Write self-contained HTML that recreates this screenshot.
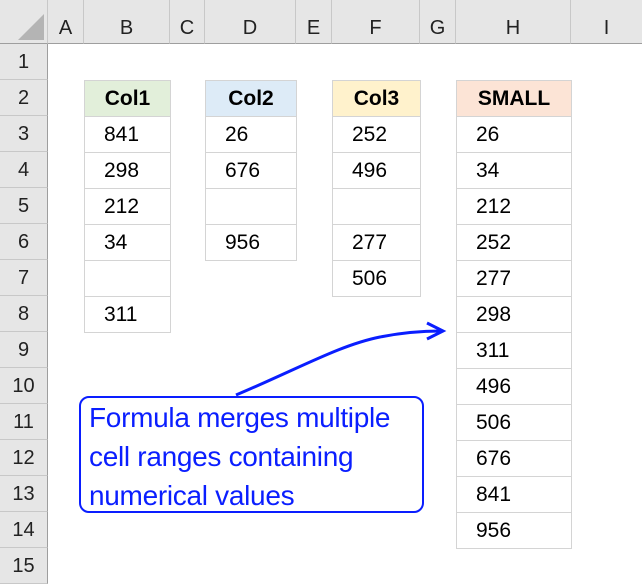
<html><head><style>
body{margin:0;width:642px;height:578px;overflow:hidden;background:#fff;font-family:"Liberation Sans",sans-serif;position:relative}
div{position:absolute;box-sizing:border-box}
.ch{top:0;height:44px;background:#e6e6e6;border-right:1px solid #c8c8c8;border-bottom:1px solid #9e9e9e;text-align:center;line-height:56px;font-size:20px;color:#222}
.rh{left:0;width:48px;height:36px;background:#e6e6e6;border-bottom:1px solid #c8c8c8;border-right:1px solid #9e9e9e;text-align:center;line-height:36px;font-size:20px;color:#222}
.c{height:37px;border:1px solid #d4d4d4;font-size:21px;line-height:36px;padding-left:19px;color:#000}
.h{font-weight:bold;text-align:center;padding-left:0}
</style></head><body>
<div class="ch" style="left:0;width:48px"><svg width="48" height="44" style="position:absolute;left:0;top:0"><polygon points="44,14 44,40 18,40" fill="#b4b4b4"/></svg></div>
<div class="ch" style="left:48px;width:36px">A</div>
<div class="ch" style="left:84px;width:86px">B</div>
<div class="ch" style="left:170px;width:35px">C</div>
<div class="ch" style="left:205px;width:91px">D</div>
<div class="ch" style="left:296px;width:36px">E</div>
<div class="ch" style="left:332px;width:88px">F</div>
<div class="ch" style="left:420px;width:36px">G</div>
<div class="ch" style="left:456px;width:115px">H</div>
<div class="ch" style="left:571px;width:71px;border-right:none">I</div>
<div class="rh" style="top:44px">1</div><div class="rh" style="top:80px">2</div><div class="rh" style="top:116px">3</div><div class="rh" style="top:152px">4</div><div class="rh" style="top:188px">5</div><div class="rh" style="top:224px">6</div><div class="rh" style="top:260px">7</div><div class="rh" style="top:296px">8</div><div class="rh" style="top:332px">9</div><div class="rh" style="top:368px">10</div><div class="rh" style="top:404px">11</div><div class="rh" style="top:440px">12</div><div class="rh" style="top:476px">13</div><div class="rh" style="top:512px">14</div><div class="rh" style="top:548px">15</div>

<div class="c h" style="left:84px;top:80px;width:87px;background:#e2efda">Col1</div>
<div class="c" style="left:84px;top:116px;width:87px">841</div>
<div class="c" style="left:84px;top:152px;width:87px">298</div>
<div class="c" style="left:84px;top:188px;width:87px">212</div>
<div class="c" style="left:84px;top:224px;width:87px">34</div>
<div class="c" style="left:84px;top:260px;width:87px"></div>
<div class="c" style="left:84px;top:296px;width:87px">311</div>

<div class="c h" style="left:205px;top:80px;width:92px;background:#ddebf7">Col2</div>
<div class="c" style="left:205px;top:116px;width:92px">26</div>
<div class="c" style="left:205px;top:152px;width:92px">676</div>
<div class="c" style="left:205px;top:188px;width:92px"></div>
<div class="c" style="left:205px;top:224px;width:92px">956</div>

<div class="c h" style="left:332px;top:80px;width:89px;background:#fff2cc">Col3</div>
<div class="c" style="left:332px;top:116px;width:89px">252</div>
<div class="c" style="left:332px;top:152px;width:89px">496</div>
<div class="c" style="left:332px;top:188px;width:89px"></div>
<div class="c" style="left:332px;top:224px;width:89px">277</div>
<div class="c" style="left:332px;top:260px;width:89px">506</div>

<div class="c h" style="left:456px;top:80px;width:116px;background:#fce4d6">SMALL</div>
<div class="c" style="left:456px;top:116px;width:116px">26</div>
<div class="c" style="left:456px;top:152px;width:116px">34</div>
<div class="c" style="left:456px;top:188px;width:116px">212</div>
<div class="c" style="left:456px;top:224px;width:116px">252</div>
<div class="c" style="left:456px;top:260px;width:116px">277</div>
<div class="c" style="left:456px;top:296px;width:116px">298</div>
<div class="c" style="left:456px;top:332px;width:116px">311</div>
<div class="c" style="left:456px;top:368px;width:116px">496</div>
<div class="c" style="left:456px;top:404px;width:116px">506</div>
<div class="c" style="left:456px;top:440px;width:116px">676</div>
<div class="c" style="left:456px;top:476px;width:116px">841</div>
<div class="c" style="left:456px;top:512px;width:116px">956</div>

<svg width="642" height="578" style="position:absolute;left:0;top:0">
<path d="M236,395 C300,368 340,345 380,337 C405,332 425,331 441,331" fill="none" stroke="#0a1eff" stroke-width="3"/>
<path d="M427,323 L443,331 L427,339" fill="none" stroke="#0a1eff" stroke-width="3"/>
</svg>
<div style="left:79px;top:396px;width:345px;height:117px;border:2px solid #0a1eff;border-radius:10px;background:#fff;color:#0a1eff;font-size:28px;line-height:39px;padding:0 0 0 8px;white-space:nowrap;letter-spacing:-0.3px">Formula merges multiple<br>cell ranges containing<br>numerical values</div>
</body></html>
